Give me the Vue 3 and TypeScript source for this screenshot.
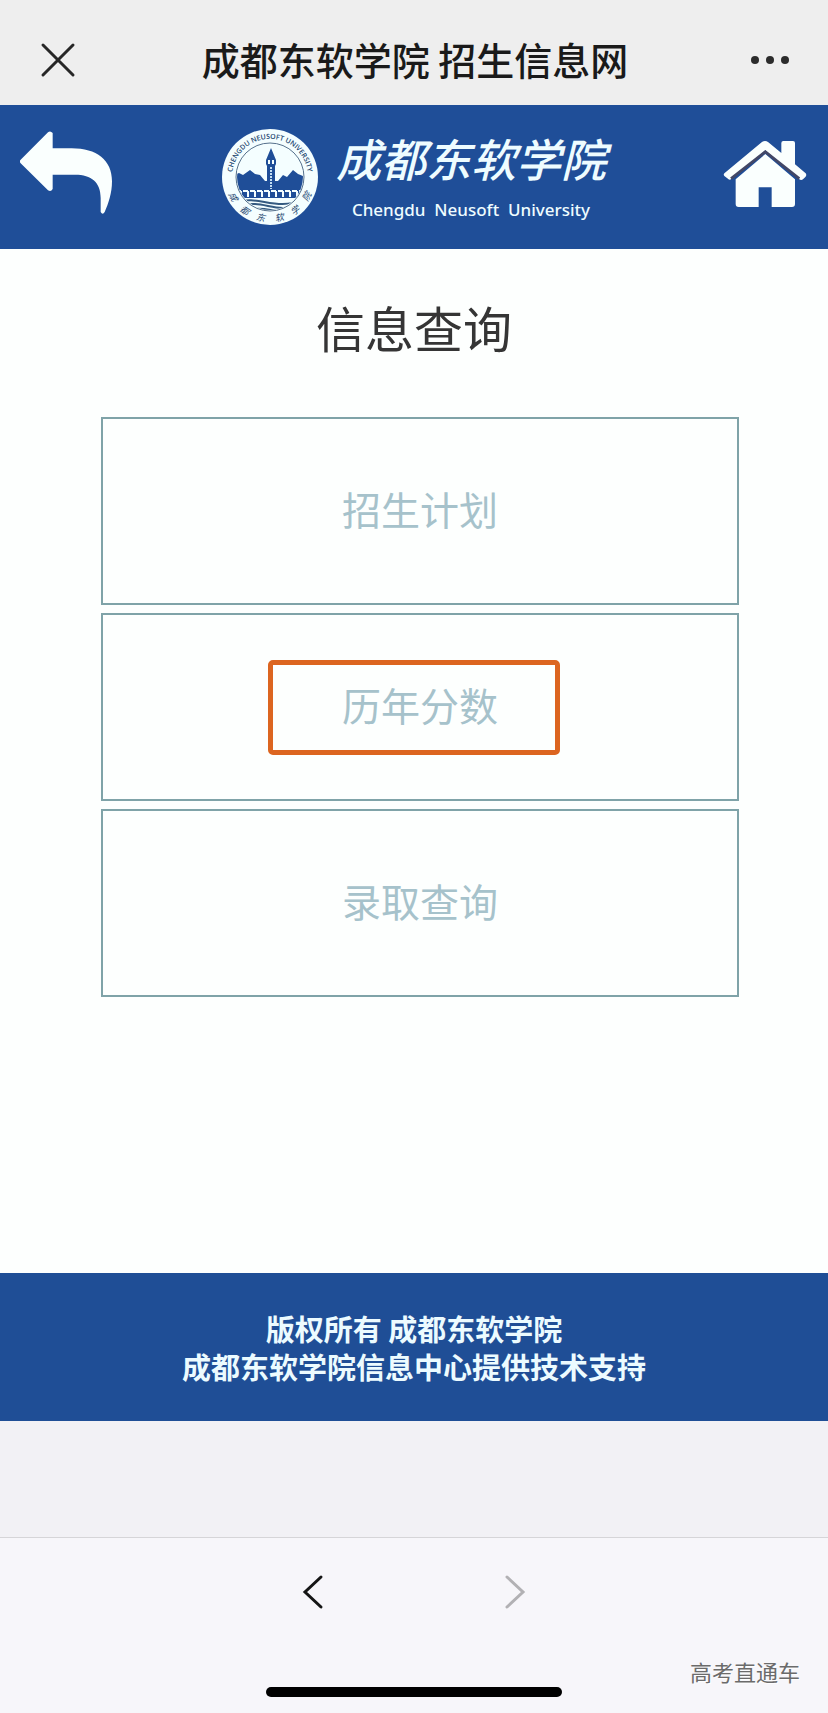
<script setup lang="ts">
interface MenuItem {
  label: string
  highlighted: boolean
}

interface RingGlyph {
  char: string
  angle: number
}

const menu: MenuItem[] = [
  { label: '招生计划', highlighted: false },
  { label: '历年分数', highlighted: true },
  { label: '录取查询', highlighted: false },
]

const ringGlyphs: RingGlyph[] = [
  { char: '成', angle: 62 },
  { char: '都', angle: 37 },
  { char: '东', angle: 13 },
  { char: '软', angle: -13 },
  { char: '学', angle: -37 },
  { char: '院', angle: -62 },
]

const pillars: number[] = [19, 26, 33, 40, 47, 54, 61, 68, 75]

const englishName = ['Chengdu', 'Neusoft', 'University'].join('\u00a0 ')
</script>

<template>
  <div class="page">
    <header class="titlebar">
      <button class="icon-button" type="button" aria-label="关闭">
        <svg width="36" height="36" viewBox="0 0 36 36" fill="none" stroke="#262626" stroke-width="3" stroke-linecap="round">
          <path d="M3 3 33 33M33 3 3 33" />
        </svg>
      </button>
      <div class="titlebar-text">成都东软学院 招生信息网</div>
      <button class="icon-button end" type="button" aria-label="更多">
        <svg width="40" height="10" viewBox="0 0 40 10" fill="#2b2b2b">
          <circle cx="5" cy="5" r="4" />
          <circle cx="20" cy="5" r="4" />
          <circle cx="35" cy="5" r="4" />
        </svg>
      </button>
    </header>

    <div class="banner">
      <button class="icon-button" type="button" aria-label="返回">
        <svg width="94" height="94" viewBox="60 58 282 282" fill="#fafffe">
          <path d="M62 147 144 65Q151 59 158 67V113H215C290 113 336 148 336 212C336 248 325 280 314 304Q308 314 302 304V262C302 215 275 192 225 192H158V235Q153 245 144 239L62 158Q57 152 62 147Z" />
        </svg>
      </button>

      <div class="brand">
        <svg class="emblem" width="96" height="96" viewBox="0 0 96 96">
          <defs>
            <path id="ring-top" d="M12 60A38 38 0 1 1 84 60" />
            <clipPath id="disc"><circle cx="48" cy="48" r="33" /></clipPath>
          </defs>
          <circle cx="48" cy="48" r="48" fill="#f4feff" />
          <g clip-path="url(#disc)">
            <path d="M12 46 17 44 21 46 28 41 33 45 38 46 43 52H56L61 46 65 48 71 41 76 45 84 48V69H12Z" fill="#1f4e98" />
            <path d="M49 19 54 31V35L53 37V61H45V37L44 35V31Z" fill="#1f4e98" />
            <path d="M47 31V35M51 31V35" stroke="#f4feff" stroke-width="2" />
            <path d="M49 38V60" stroke="#c5dff2" stroke-width="2" stroke-dasharray="2 1" />
            <path d="M14 62H84" stroke="#f4feff" stroke-width="2" stroke-dasharray="5 2" />
            <path v-for="x in pillars" :key="x" :d="`M${x} 62V68`" stroke="#f4feff" stroke-width="2" />
            <path d="M16 73C36 66 53 82 82 71M19 77C40 70 54 85 77 76M27 81C44 76 53 86 68 81" fill="none" stroke="#345a80" stroke-width="2" />
          </g>
          <circle cx="48" cy="48" r="34" fill="none" stroke="#56718c" stroke-width="1" />
          <text class="ring-latin" text-anchor="middle">
            <textPath href="#ring-top" startOffset="50%">CHENGDU NEUSOFT UNIVERSITY</textPath>
          </text>
          <text
            v-for="glyph in ringGlyphs"
            :key="glyph.char"
            class="ring-cjk"
            x="48"
            y="93"
            text-anchor="middle"
            :transform="`rotate(${glyph.angle} 48 48)`"
          >{{ glyph.char }}</text>
        </svg>
        <div class="brand-text">
          <div class="brand-cn">成都东软学院</div>
          <div class="brand-en">{{ englishName }}</div>
        </div>
      </div>

      <a class="home" href="#" aria-label="首页">
        <svg width="86" height="74" viewBox="65 360 258 222" fill="#fafffe">
          <path d="M106 478 195 402 284 478V552Q284 561 275 561H214V502H175V561H115Q106 561 106 552Z" />
          <path d="M73 459 184 367Q194 359 204 367L243 399V369Q243 363 249 363H278Q284 363 284 369V433L316 460Q320 465 315 471L308 478Q302 482 296 477L195 391 93 477Q87 482 81 475L72 468Q68 463 73 459Z" />
          <path d="M92 476 195 395 297 476" fill="none" stroke="#424766" stroke-width="8" />
        </svg>
      </a>
    </div>

    <main class="content">
      <h1>信息查询</h1>
      <nav class="menu">
        <a v-for="item in menu" :key="item.label" class="menu-item" href="#">
          {{ item.label }}
          <span v-if="item.highlighted" class="marker"></span>
        </a>
      </nav>
    </main>

    <footer class="copyright">
      <div>版权所有 成都东软学院</div>
      <div>成都东软学院信息中心提供技术支持</div>
    </footer>

    <div class="spacer"></div>

    <div class="toolbar">
      <div class="history">
        <button class="icon-button" type="button" aria-label="后退">
          <svg width="22" height="36" viewBox="0 0 22 36" fill="none" stroke="#151515" stroke-width="3" stroke-linecap="round">
            <path d="M19 3 3 18 19 33" />
          </svg>
        </button>
        <button class="icon-button" type="button" aria-label="前进">
          <svg width="22" height="36" viewBox="0 0 22 36" fill="none" stroke="#b2b1b4" stroke-width="3" stroke-linecap="round">
            <path d="M3 3 19 18 3 33" />
          </svg>
        </button>
      </div>
      <div class="home-indicator"></div>
      <div class="watermark">高考直通车</div>
    </div>
  </div>
</template>

<style>
body {
  margin: 0;
}
</style>

<style scoped>
.page {
  display: flex;
  flex-direction: column;
  min-height: 100vh;
  background: #fdfffe;
  font-family: "Noto Sans CJK SC", "Noto Sans", sans-serif;
}

.icon-button {
  display: flex;
  padding: 0;
  border: 0;
  background: none;
  cursor: pointer;
}

.end {
  justify-self: end;
}

.titlebar {
  display: grid;
  grid-template-columns: 1fr auto 1fr;
  align-items: center;
  box-sizing: border-box;
  height: 105px;
  padding: 15px 38px 0 40px;
  background: #eeeeee;
}

.titlebar-text {
  padding-bottom: 2px;
  color: #1a1a1a;
  font-size: 38px;
  font-weight: 500;
  line-height: 56px;
}

.banner {
  display: grid;
  grid-template-columns: 1fr auto 1fr;
  align-items: center;
  height: 144px;
  padding: 0 20px;
  background: #1f4e98;
}

.brand {
  display: flex;
  align-items: center;
  gap: 18px;
}

.emblem {
  flex: none;
}

.ring-latin {
  fill: #23466f;
  font-family: "Open Sans", sans-serif;
  font-size: 7px;
  font-weight: 600;
}

.ring-cjk {
  fill: #23466f;
  font-size: 9px;
  font-style: italic;
}

.brand-text {
  display: flex;
  flex-direction: column;
  gap: 10px;
  color: #eefcff;
}

.brand-cn {
  font-size: 45px;
  font-style: italic;
  font-weight: 500;
  line-height: 56px;
}

.brand-en {
  font-family: "Noto Sans", "Open Sans", sans-serif;
  font-size: 17px;
  font-weight: 500;
  line-height: 28px;
  text-align: center;
  white-space: nowrap;
}

.home {
  display: flex;
  justify-self: end;
}

.content {
  padding: 42px 89px 276px 101px;
}

h1 {
  margin: 0 -89px 54px -101px;
  color: #353535;
  font-size: 49px;
  font-weight: 400;
  line-height: 72px;
  text-align: center;
}

.menu {
  display: flex;
  flex-direction: column;
  gap: 8px;
}

.menu-item {
  position: relative;
  display: flex;
  align-items: center;
  justify-content: center;
  box-sizing: border-box;
  height: 188px;
  padding-bottom: 6px;
  border: 2px solid #7fa3a8;
  color: #a6c2cb;
  font-size: 39px;
  font-weight: 400;
  text-decoration: none;
}

.marker {
  position: absolute;
  top: 45px;
  left: calc(50% - 152px);
  box-sizing: border-box;
  width: 292px;
  height: 95px;
  border: 5px solid #dc6520;
  border-radius: 5px;
}

.copyright {
  padding: 36px 16px;
  background: #1f4e96;
  color: #ecfbff;
  font-size: 29px;
  font-weight: 700;
  line-height: 38px;
  text-align: center;
}

.spacer {
  flex: 1;
  min-height: 116px;
  background: #f2f1f5;
}

.toolbar {
  position: relative;
  display: flex;
  flex-direction: column;
  align-items: center;
  box-sizing: border-box;
  padding: 36px 0 16px;
  border-top: 1px solid #d6d5d8;
  background: #f7f6fa;
}

.history {
  display: flex;
  gap: 180px;
}

.home-indicator {
  width: 296px;
  height: 10px;
  margin-top: 77px;
  border-radius: 5px;
  background: #000000;
}

.watermark {
  position: absolute;
  right: 28px;
  bottom: 26px;
  color: #6b6b6b;
  font-size: 22px;
  line-height: 32px;
  text-shadow: 1px 1px 1px #ffffff;
}
</style>
